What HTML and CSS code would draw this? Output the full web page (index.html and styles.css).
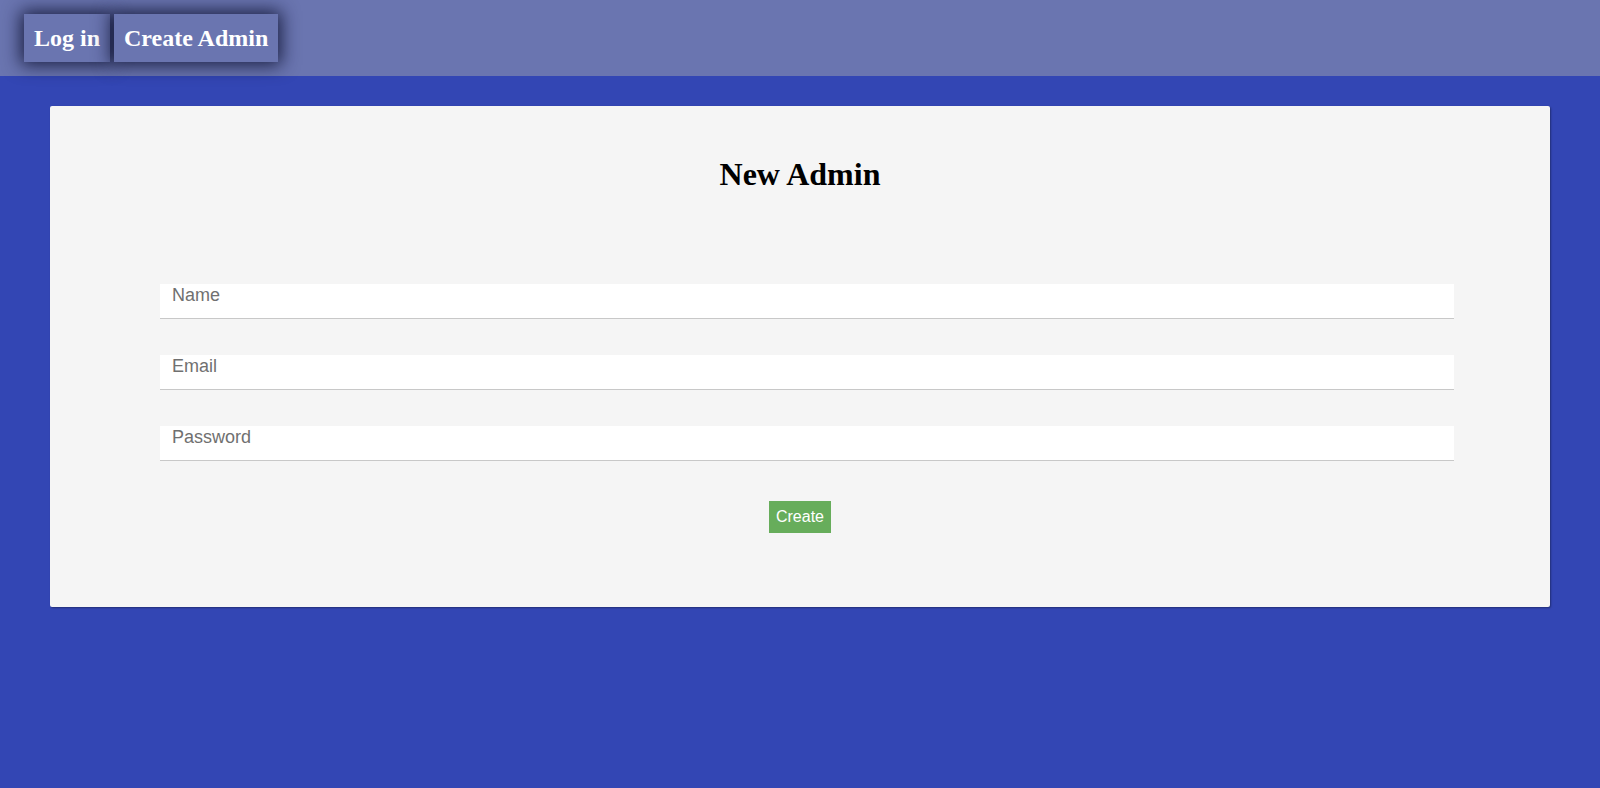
FILE: index.html
```html
<!DOCTYPE html>
<html>
<head>
<meta charset="utf-8">
<link rel="stylesheet" href="styles.css">
</head>
<body>
<header class="topbar">
  <a class="nav-btn" href="#">Log in</a>
  <a class="nav-btn" href="#">Create Admin</a>
</header>
<main class="page">
  <section class="card">
    <h1 class="title">New Admin</h1>
    <form class="form">
      <input class="field" type="text" placeholder="Name">
      <input class="field" type="email" placeholder="Email">
      <input class="field" type="password" placeholder="Password">
      <div class="actions"><button class="submit" type="button">Create</button></div>
    </form>
  </section>
</main>
</body>
</html>
```

FILE: styles.css
```css
html, body {
  margin: 0;
  padding: 0;
  background: #3346b4;
  height: 100%;
}
body {
  font-family: "Liberation Serif", "Times New Roman", serif;
}
.topbar {
  height: 76px;
  background: #6a75b0;
  display: flex;
  align-items: flex-start;
  gap: 4px;
  padding: 14px 0 0 24px;
  box-sizing: border-box;
}
.nav-btn {
  display: flex;
  align-items: center;
  height: 48px;
  padding: 0 10px;
  box-sizing: border-box;
  background: #6a75b0;
  color: #fff;
  font-weight: bold;
  font-size: 24px;
  text-decoration: none;
  box-shadow: 0 0 18px 3px rgba(10, 14, 45, 0.85);
}
.page {
  padding: 30px 50px 0;
}
.card {
  background: #f5f5f5;
  height: 501px;
  box-sizing: border-box;
  border-radius: 2px;
  box-shadow: 1px 1px 2px rgba(0, 0, 0, 0.35);
  padding-top: 50px;
}
.title {
  margin: 0;
  text-align: center;
  font-size: 32px;
  font-weight: bold;
  line-height: 37px;
  color: #000;
}
.form {
  display: flex;
  flex-direction: column;
  gap: 36px;
  padding: 91px 96px 0 110px;
}
.field {
  display: block;
  width: 100%;
  height: 35px;
  box-sizing: border-box;
  border: none;
  border-bottom: 1px solid #c8c8c8;
  background: #fff;
  padding: 0 12px 12px;
  font-family: "Liberation Sans", Arial, sans-serif;
  font-size: 18px;
  color: #333;
  outline: none;
}
.field::placeholder {
  color: #707070;
}
.actions {
  display: flex;
  justify-content: center;
  margin-top: 4px;
  margin-left: -14px;
}
.submit {
  width: 62px;
  height: 32px;
  background: #67ad5b;
  color: #fff;
  border: none;
  padding: 0;
  font-family: "Liberation Sans", Arial, sans-serif;
  font-size: 16px;
}
```
